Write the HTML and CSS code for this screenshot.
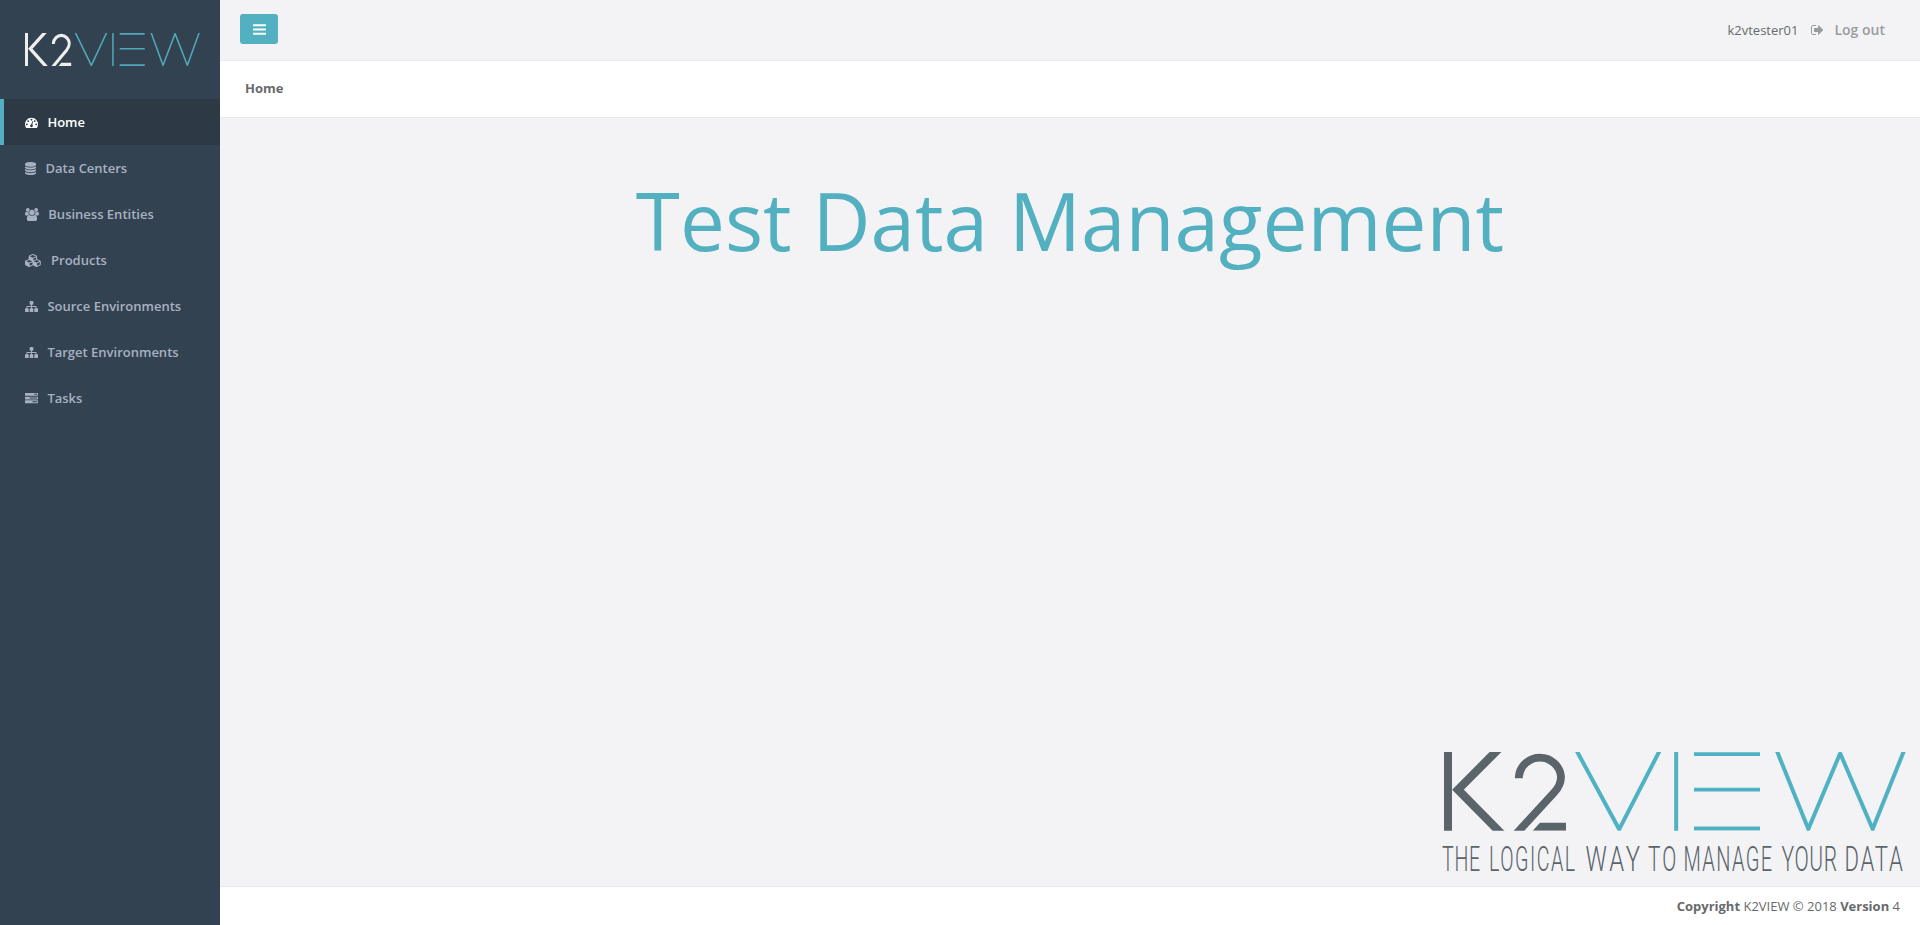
FILE: index.html
```html
<!DOCTYPE html>
<html lang="en">
<head>
<meta charset="utf-8">
<title>Test Data Management</title>
<link rel="stylesheet" href="styles.css">
</head>
<body>
<svg class="defs" aria-hidden="true">
  <symbol id="wordmark" viewBox="42 50 1386 236" preserveAspectRatio="none">
    <g class="mark-dark">
      <path stroke-width="24" d="M54 40V296"/>
      <path stroke-width="25" d="M217.500 29L84 163L225 306"/>
      <path stroke-width="23.500" d="M266.500 129V124A63.500 62.500 0 0 1 393 124C393 145 385 158 372 172L248 307"/>
      <path class="mark-foot" d="M330 262H408V286H308Z"/>
    </g>
    <g class="mark-teal" stroke-width="12">
      <path d="M431.200 30L567.500 282L697.300 30"/>
      <path d="M738.500 40V296"/>
      <path stroke-width="11.500" d="M792 56.500H990M792 163H990M792 279.500H990"/>
      <path d="M1034 30L1135 281L1230.500 54L1328 281L1428.500 30"/>
    </g>
  </symbol>
  <symbol id="i-bars" viewBox="128 0 1536 1792"><path d="M1664 1344v128q0 26-19 45t-45 19h-1408q-26 0-45-19t-19-45v-128q0-26 19-45t45-19h1408q26 0 45 19t19 45zm0-512v128q0 26-19 45t-45 19h-1408q-26 0-45-19t-19-45v-128q0-26 19-45t45-19h1408q26 0 45 19t19 45zm0-512v128q0 26-19 45t-45 19h-1408q-26 0-45-19t-19-45v-128q0-26 19-45t45-19h1408q26 0 45 19t19 45z"/></symbol>
  <symbol id="i-dash" viewBox="0 0 1792 1792"><path d="M384 1152q0-53-37.500-90.500t-90.500-37.500-90.500 37.500-37.500 90.500 37.500 90.500 90.500 37.500 90.500-37.500 37.500-90.500zm192-448q0-53-37.500-90.500t-90.500-37.500-90.500 37.500-37.500 90.500 37.500 90.500 90.500 37.500 90.500-37.500 37.500-90.500zm428 481l101-382q6-26-7.500-48.500t-38.500-29.500-48 6.500-30 39.500l-101 382q-60 5-107 43.500t-63 98.500q-20 77 20 146t117 89 146-20 89-117q16-60-6-117t-72-91zm660-33q0-53-37.500-90.500t-90.500-37.500-90.500 37.500-37.500 90.500 37.500 90.500 90.500 37.500 90.500-37.500 37.500-90.500zm-640-640q0-53-37.500-90.500t-90.500-37.500-90.500 37.500-37.500 90.500 37.500 90.500 90.500 37.500 90.500-37.500 37.500-90.500zm448 192q0-53-37.500-90.500t-90.500-37.500-90.500 37.500-37.500 90.500 37.500 90.500 90.500 37.500 90.500-37.500 37.500-90.500zm320 448q0 261-141 483-19 29-54 29h-1402q-35 0-54-29-141-221-141-483 0-182 71-348t191-286 286-191 348-71 348 71 286 191 191 286 71 348z"/></symbol>
  <symbol id="i-db" viewBox="128 0 1536 1792"><path d="M896 768q237 0 443-43t325-127v170q0 69-103 128t-280 93.500-385 34.500-385-34.500-280-93.500-103-128v-170q119 84 325 127t443 43zm0 768q237 0 443-43t325-127v170q0 69-103 128t-280 93.500-385 34.500-385-34.500-280-93.500-103-128v-170q119 84 325 127t443 43zm0-384q237 0 443-43t325-127v170q0 69-103 128t-280 93.500-385 34.500-385-34.500-280-93.500-103-128v-170q119 84 325 127t443 43zm0-1152q208 0 385 34.500t280 93.500 103 128v128q0 69-103 128t-280 93.500-385 34.500-385-34.500-280-93.500-103-128v-128q0-69 103-128t280-93.500 385-34.500z"/></symbol>
  <symbol id="i-users" viewBox="64 0 1920 1792"><path d="M657 896q-162 5-265 128h-134q-82 0-138-40.500t-56-118.500q0-353 124-353 6 0 43.500 21t97.500 42.500 119 21.500q67 0 133-23-5 37-5 66 0 139 81 256zm1071 637q0 120-73 189.500t-194 69.500h-874q-121 0-194-69.500t-73-189.500q0-53 3.500-103.500t14-109 26.500-108.500 43-97.500 62-81 85.500-53.500 111.500-20q10 0 43 21.500t73 48 107 48 135 21.500 135-21.500 107-48 73-48 43-21.500q61 0 111.500 20t85.500 53.500 62 81 43 97.500 26.500 108.500 14 109 3.500 103.500zm-1024-1277q0 106-75 181t-181 75-181-75-75-181 75-181 181-75 181 75 75 181zm704 384q0 159-112.500 271.500t-271.500 112.500-271.500-112.500-112.500-271.500 112.500-271.500 271.500-112.500 271.500 112.500 112.500 271.500zm576 225q0 78-56 118.500t-138 40.500h-134q-103-123-265-128 81-117 81-256 0-29-5-66 66 23 133 23 59 0 119-21.500t97.500-42.500 43.500-21q124 0 124 353zm-128-609q0 106-75 181t-181 75-181-75-75-181 75-181 181-75 181 75 75 181z"/></symbol>
  <symbol id="i-cubes" viewBox="0 0 2304 1792"><path d="M640 1632l384-192v-314l-384 164v342zm-64-454l404-173-404-173-404 173zm1088 454l384-192v-314l-384 164v342zm-64-454l404-173-404-173-404 173zm-448-293l384-165v-266l-384 164v267zm-64-379l441-189-441-189-441 189zm1088 518v416q0 36-19 67t-52 47l-448 224q-25 14-57 14t-57-14l-448-224q-4-2-7-4-2 2-7 4l-448 224q-25 14-57 14t-57-14l-448-224q-33-16-52-47t-19-67v-416q0-38 21.500-70t56.500-48l434-186v-400q0-38 21.500-70t56.500-48l448-192q23-10 50-10t50 10l448 192q35 16 56.500 48t21.500 70v400l434 186q36 16 57 48t21 70z"/></symbol>
  <symbol id="i-sitemap" viewBox="0 0 1792 1792"><path d="M1792 1248v320q0 40-28 68t-68 28h-320q-40 0-68-28t-28-68v-320q0-40 28-68t68-28h96v-192h-512v192h96q40 0 68 28t28 68v320q0 40-28 68t-68 28h-320q-40 0-68-28t-28-68v-320q0-40 28-68t68-28h96v-192h-512v192h96q40 0 68 28t28 68v320q0 40-28 68t-68 28h-320q-40 0-68-28t-28-68v-320q0-40 28-68t68-28h96v-192q0-52 38-90t90-38h512v-192h-96q-40 0-68-28t-28-68v-320q0-40 28-68t68-28h320q40 0 68 28t28 68v320q0 40-28 68t-68 28h-96v192h512q52 0 90 38t38 90v192h96q40 0 68 28t28 68z"/></symbol>
  <symbol id="i-tasks" viewBox="0 0 1792 1792"><path d="M1024 1408h640v-128h-640v128zm-384-512h1024v-128h-1024v128zm640-512h384v-128h-384v128zm512 832v256q0 26-19 45t-45 19h-1664q-26 0-45-19t-19-45v-256q0-26 19-45t45-19h1664q26 0 45 19t19 45zm0-512v256q0 26-19 45t-45 19h-1664q-26 0-45-19t-19-45v-256q0-26 19-45t45-19h1664q26 0 45 19t19 45zm0-512v256q0 26-19 45t-45 19h-1664q-26 0-45-19t-19-45v-256q0-26 19-45t45-19h1664q26 0 45 19t19 45z"/></symbol>
  <symbol id="i-signout" viewBox="64 0 1664 1792"><path d="M704 1440q0 4 1 20t.5 26.500-3 23.500-10 19.500-20.500 6.500h-320q-119 0-203.500-84.500t-84.500-203.500v-704q0-119 84.500-203.500t203.500-84.500h320q13 0 22.500 9.500t9.500 22.500q0 4 1 20t.5 26.500-3 23.500-10 19.500-20.500 6.500h-320q-66 0-113 47t-47 113v704q0 66 47 113t113 47h312l11.500 1 11.500 3 8 5.500 7 9 2 13.500zm928-544q0 26-19 45l-544 544q-19 19-45 19t-45-19-19-45v-288h-448q-26 0-45-19t-19-45v-384q0-26 19-45t45-19h448v-288q0-26 19-45t45-19 45 19l544 544q19 19 19 45z"/></symbol>
</svg>
<div class="layout">
  <nav class="sidebar">
    <div class="brand"><svg class="brand-logo" role="img" aria-label="K2View"><use href="#wordmark"/></svg></div>
    <ul class="menu">
      <li class="active"><a><svg class="fa"><use href="#i-dash"/></svg> Home</a></li>
      <li><a><svg class="fa fa-narrow"><use href="#i-db"/></svg> Data Centers</a></li>
      <li><a><svg class="fa fa-users"><use href="#i-users"/></svg> Business Entities</a></li>
      <li><a><svg class="fa fa-cubes"><use href="#i-cubes"/></svg> Products</a></li>
      <li><a><svg class="fa"><use href="#i-sitemap"/></svg> Source Environments</a></li>
      <li><a><svg class="fa"><use href="#i-sitemap"/></svg> Target Environments</a></li>
      <li><a><svg class="fa"><use href="#i-tasks"/></svg> Tasks</a></li>
    </ul>
  </nav>
  <div class="page">
    <header class="topbar">
      <button class="toggle" aria-label="Toggle menu"><svg class="bars"><use href="#i-bars"/></svg></button>
      <div class="account">
        <span class="user">k2vtester01</span>
        <a class="logout"><svg class="out"><use href="#i-signout"/></svg><span>Log out</span></a>
      </div>
    </header>
    <div class="crumbs"><strong>Home</strong></div>
    <main class="content">
      <h1 class="title">Test Data Management</h1>
      <div class="promo">
        <svg class="promo-logo" role="img" aria-label="K2View"><use href="#wordmark"/></svg>
        <svg class="tagline" viewBox="0 0 462 32">
          <text transform="translate(0 27.800) scale(.57 1)" textLength="67">THE</text>
          <text transform="translate(47 27.800) scale(.57 1)" textLength="151">LOGICAL</text>
          <text transform="translate(143.500 27.800) scale(.69 1)" textLength="79">WAY</text>
          <text transform="translate(206 27.800) scale(.6 1)" textLength="47">TO</text>
          <text transform="translate(241.500 27.800) scale(.58 1)" textLength="153">MANAGE</text>
          <text transform="translate(339.500 27.800) scale(.61 1)" textLength="91">YOUR</text>
          <text transform="translate(402.500 27.800) scale(.64 1)" textLength="91">DATA</text>
        </svg>
      </div>
    </main>
    <footer class="footer"><span><strong>Copyright</strong> K2VIEW © 2018 <strong>Version</strong> 4</span></footer>
  </div>
</div>
</body>
</html>
```
FILE: styles.css
```css
* { box-sizing: border-box; }
body {
  margin: 0;
  font-family: "Open Sans", "Liberation Sans", sans-serif;
  font-size: 13px;
  line-height: 18px;
  color: #676a6c;
  background: #f3f3f5;
}
.defs { display: block; width: 0; height: 0; }
.layout { display: flex; height: 925px; }
.sidebar { width: 220px; flex: none; background: #334250; }
.brand { height: 99px; padding: 33px 0 0 25px; --mark: #eeeeee; --accent: #4fa9ba; }
.brand-logo { display: block; width: 175px; height: 33px; }
.mark-dark { stroke: var(--mark); fill: none; }
.mark-foot { fill: var(--mark); stroke: none; }
.mark-teal { stroke: var(--accent); fill: none; }
.menu { list-style: none; margin: 0; padding: 0; }
.menu li { height: 46px; padding: 14px 20px 14px 25px; }
.menu a { color: #a7b1c2; font-weight: 600; white-space: nowrap; }
.menu .active { background: #2d3a46; border-left: 4px solid #52b0c1; padding-left: 21px; }
.menu .active a { color: #fff; }
.fa { width: 13px; height: 13px; margin-right: 6px; vertical-align: -1.86px; fill: currentColor; overflow: visible; }
.fa-narrow { width: 11.14px; }
.fa-users { width: 13.93px; }
.fa-cubes { width: 16.71px; }
.page { flex: 1; display: flex; flex-direction: column; }
.topbar {
  height: 61px;
  border-bottom: 1px solid #e7eaec;
  display: flex;
  justify-content: space-between;
  align-items: flex-start;
  padding: 14px 35px 0 20px;
}
.toggle {
  width: 38px; height: 30px;
  display: flex; align-items: center; justify-content: center;
  border: 0; border-radius: 3px; padding: 0;
  background: #52b0c1; color: #fff;
}
.bars { width: 13px; height: 15px; fill: currentColor; }
.account { display: flex; align-items: center; gap: 13px; padding-top: 6px; line-height: 20px; }
.logout { display: flex; align-items: center; color: #999c9e; font-weight: 600; font-size: 14px; }
.out { width: 13px; height: 14px; margin-right: 10px; fill: currentColor; }
.crumbs { height: 57px; background: #fff; border-bottom: 1px solid #e7eaec; padding: 18px 25px; }
.crumbs strong, .footer strong { font-weight: 700; }
.content { flex: 1; display: flex; flex-direction: column; justify-content: space-between; }
.title {
  margin: 47px 0 0;
  text-align: center;
  font-size: 80px;
  line-height: 110px;
  font-weight: 400;
  letter-spacing: .04px;
  color: #52b0c1;
}
.promo { align-self: flex-end; width: 478px; padding: 0 0 11px 2px; --mark: #5b646b; --accent: #4fb2c2; }
.promo-logo { display: block; width: 462px; height: 78.67px; }
.tagline { display: block; width: 462px; height: 32px; margin: 12px 0 0 -2px; overflow: visible; }
.tagline text { font-family: Roboto, "Liberation Sans", sans-serif; font-weight: 300; font-size: 34.5px; fill: #5b646b; }
.footer {
  height: 39px;
  background: #fff;
  border-top: 1px solid #e7eaec;
  padding: 10px 20px;
  text-align: right;
}
```
